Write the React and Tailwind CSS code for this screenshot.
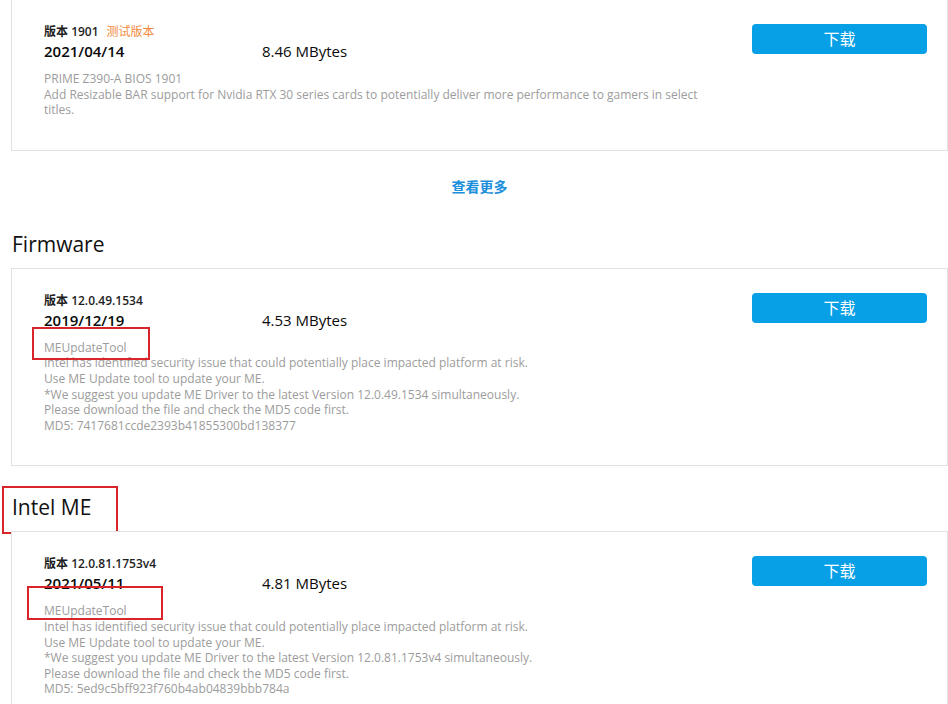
// Driver download list: BIOS entry, Firmware and Intel ME sections

const font = { fontFamily: '"Open Sans", "Noto Sans CJK SC", sans-serif' }

function DownloadCard({ version, beta, date, size, lines, first, mark }) {
  return (
    <div className={`relative flex border border-[#e2e2e2] bg-white pl-8 pr-5 pt-6 pb-8 ${first ? '-mt-px' : ''}`}>
      <div className="flex-1 min-w-0">
        <div className="text-[12px] leading-[16px] font-bold text-[#1e1e1e]">
          版本 <span className="font-semibold">{version}</span>
          {beta && <span className="ml-2 font-normal text-[#f28a3d]">{beta}</span>}
        </div>
        <div className="flex text-[15px] leading-[22px] font-semibold text-[#0a0a0a]">
          <span className="w-[218px]">{date}</span>
          <span className="font-medium">{size}</span>
        </div>
        <div className="mt-[9px] max-w-[676px] text-[12px] leading-[15.6px] text-[#9c9c9c]">
          {lines.map((l, i) => (
            <div key={i}>{l}</div>
          ))}
        </div>
      </div>
      <button className="h-[30px] w-[175px] shrink-0 rounded-[4px] bg-[#079fe6] text-[16px] text-white">
        下载
      </button>
      {mark && <div className={`absolute border-2 border-[#d9252a] ${mark}`} />}
    </div>
  )
}

function Heading({ children, boxed, top }) {
  return (
    <div className={`relative mb-[10px] h-[28px] ${top}`}>
      <h2 className="pl-px text-[21px] leading-[28px] font-medium text-[#111]">{children}</h2>
      {boxed && (
        <div className="absolute -left-[9px] -top-[7px] h-[48px] w-[116px] border-2 border-[#d9252a]" />
      )}
    </div>
  )
}

export default function App() {
  const meLines = (ver) => [
    'MEUpdateTool',
    'Intel has identified security issue that could potentially place impacted platform at risk.',
    'Use ME Update tool to update your ME.',
    `*We suggest you update ME Driver to the latest Version ${ver} simultaneously.`,
    'Please download the file and check the MD5 code first.',
  ]

  return (
    <div className="h-[704px] w-[948px] overflow-hidden bg-white pl-[11px]" style={font}>
      <DownloadCard
        first
        version="1901"
        beta="测试版本"
        date="2021/04/14"
        size="8.46 MBytes"
        lines={[
          'PRIME Z390-A BIOS 1901',
          'Add Resizable BAR support for Nvidia RTX 30 series cards to potentially deliver more performance to gamers in select titles.',
        ]}
      />

      <div className="mt-[23px] text-center">
        <a className="text-[14px] leading-[20px] font-bold text-[#1b8fdb]">查看更多</a>
      </div>

      <Heading top="mt-[32px]">Firmware</Heading>
      <DownloadCard
        version="12.0.49.1534"
        date="2019/12/19"
        size="4.53 MBytes"
        lines={[...meLines('12.0.49.1534'), 'MD5: 7417681ccde2393b41855300bd138377']}
        mark="left-[20px] top-[58px] h-[33px] w-[118px]"
      />

      <Heading boxed top="mt-[27px]">Intel ME</Heading>
      <DownloadCard
        version="12.0.81.1753v4"
        date="2021/05/11"
        size="4.81 MBytes"
        lines={[...meLines('12.0.81.1753v4'), 'MD5: 5ed9c5bff923f760b4ab04839bbb784a']}
        mark="left-[15px] top-[54px] h-[34px] w-[136px]"
      />
    </div>
  )
}
